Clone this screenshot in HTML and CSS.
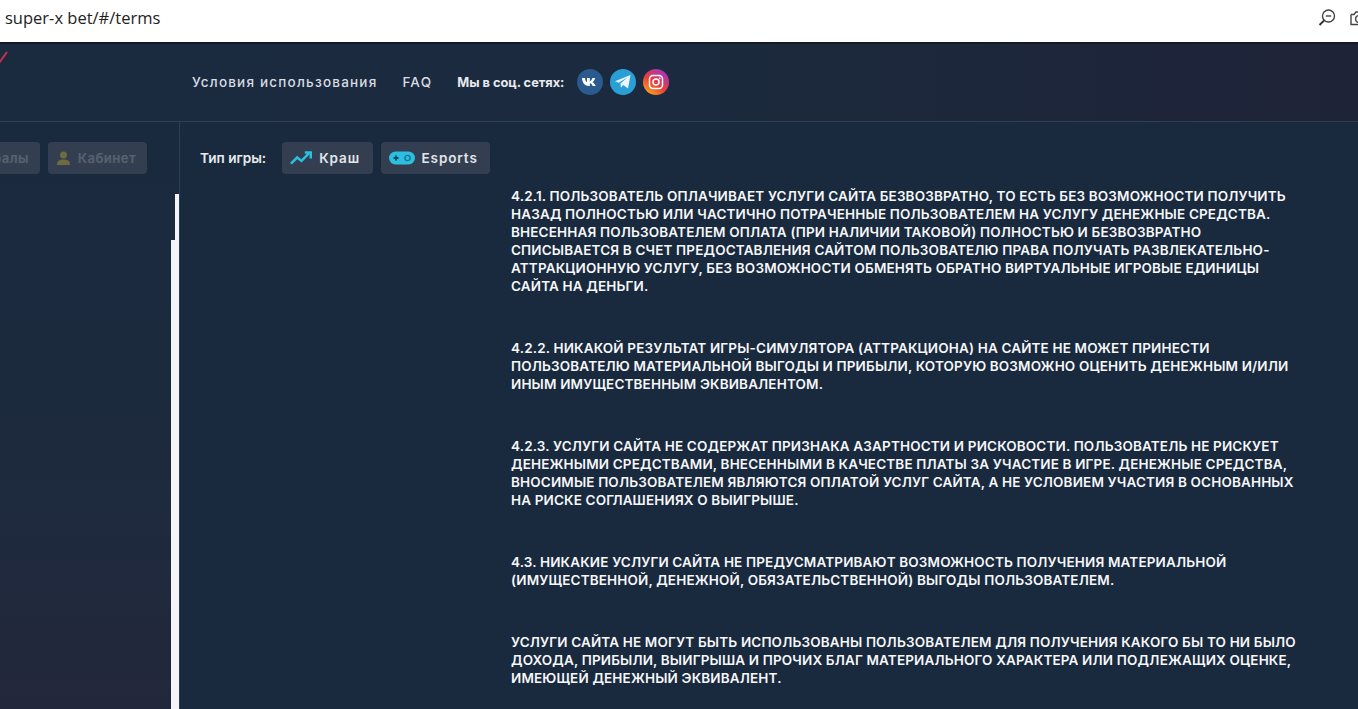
FILE: index.html
```html
<!DOCTYPE html>
<html lang="ru">
<head>
<meta charset="utf-8">
<title>super-x bet</title>
<link rel="stylesheet" href="styles.css">
</head>
<body>
<div class="urlbar">
  <span class="url">super-x bet/#/terms</span>
  <div class="tools">
    <svg class="tool" width="20" height="20" viewBox="0 0 20 20"><circle cx="11.5" cy="8" r="6" fill="none" stroke="#444" stroke-width="1.4"/><path d="M8.8 8h5.4" stroke="#444" stroke-width="1.4"/><path d="M7.2 12.4 2.5 17" stroke="#333" stroke-width="2"/></svg>
    <svg class="tool" width="14" height="20" viewBox="0 0 14 20"><path d="M1 6.5h3l2-2.500h8M1 6.500v10h13" fill="none" stroke="#444" stroke-width="1.4"/><circle cx="9" cy="11" r="3.400" fill="none" stroke="#444" stroke-width="1.300"/></svg>
  </div>
</div>
<header class="header">
  <div class="logo-slot">
    <svg class="logo-tick" width="10" height="14" viewBox="0 0 10 14"><path d="M0 12 8 1" stroke="#c8324f" stroke-width="2" fill="none"/></svg>
  </div>
  <nav class="nav">
    <a class="nav-link">Условия использования</a>
    <a class="nav-link">FAQ</a>
    <span class="social-label">Мы в соц. сетях:</span>
    <div class="socials">
      <span class="social vk"><svg width="18" height="12" viewBox="0 0 18 12"><path d="M1 2h3c.2 2.500 1.200 4 2 4.300V2h2.800v3.400C9.800 5.200 10.800 3.800 11.400 2h2.800c-.4 1.900-1.700 3.400-2.700 4.200 1 .6 2.500 1.900 3.200 3.800h-3c-.6-1.600-1.700-2.600-2.900-2.800V10h-.8C4 10 1.300 7 1 2Z" fill="#fff"/></svg></span>
      <span class="social tg"><svg width="18" height="16" viewBox="0 0 18 16"><path d="M1 7.300 16.500 1 14 14.500 9.300 11l-2.400 2.500-.5-3.900 7-6-8.800 5.200Z" fill="#eaf4fa"/></svg></span>
      <span class="social ig"><svg width="16" height="16" viewBox="0 0 16 16" fill="none" stroke="#fff" stroke-width="1.500"><rect x="1.500" y="1.500" width="13" height="13" rx="3.500"/><circle cx="8" cy="8" r="3"/><circle cx="11.700" cy="4.300" r=".6" fill="#fff" stroke-width=".6"/></svg></span>
    </div>
  </nav>
</header>
<div class="body">
  <aside class="sidebar">
    <div class="side-buttons">
      <span class="side-btn">Рефералы</span>
      <span class="side-btn"><svg width="15" height="15" viewBox="0 0 15 15"><circle cx="7.500" cy="4" r="3.500" fill="#6f6a3f"/><path d="M1 14c0-4 2-5.500 6.500-5.500S14 10 14 14Z" fill="#6f6a3f"/></svg>Кабинет</span>
    </div>
    <div class="thumb-outer"></div>
    <div class="thumb-inner"></div>
  </aside>
  <main class="main">
    <div class="game-types">
      <span class="type-label">Тип игры:</span>
      <span class="type-btn"><svg width="22" height="14" viewBox="0 0 23 14"><path d="M1 13 7.500 6.500l4.500 3.500 8-8" fill="none" stroke="#2bbfe0" stroke-width="2.600"/><path d="M15.500 1.300H21.700v6.200" fill="none" stroke="#2bbfe0" stroke-width="2.600"/></svg>Краш</span>
      <span class="type-btn"><svg width="26" height="14" viewBox="0 0 26 14"><rect x="0" y="0.500" width="26" height="13" rx="6.500" fill="#2bbfe0"/><path d="M7 4.500v5M4.500 7h5" stroke="#1a4a66" stroke-width="1.800"/><circle cx="18.500" cy="7" r="2.600" fill="none" stroke="#1a6f8e" stroke-width="1.300"/></svg>Esports</span>
    </div>
    <article class="terms">
      <p>4.2.1. ПОЛЬЗОВАТЕЛЬ ОПЛАЧИВАЕТ УСЛУГИ САЙТА БЕЗВОЗВРАТНО, ТО ЕСТЬ БЕЗ ВОЗМОЖНОСТИ ПОЛУЧИТЬ<br>НАЗАД ПОЛНОСТЬЮ ИЛИ ЧАСТИЧНО ПОТРАЧЕННЫЕ ПОЛЬЗОВАТЕЛЕМ НА УСЛУГУ ДЕНЕЖНЫЕ СРЕДСТВА.<br>ВНЕСЕННАЯ ПОЛЬЗОВАТЕЛЕМ ОПЛАТА (ПРИ НАЛИЧИИ ТАКОВОЙ) ПОЛНОСТЬЮ И БЕЗВОЗВРАТНО<br>СПИСЫВАЕТСЯ В СЧЕТ ПРЕДОСТАВЛЕНИЯ САЙТОМ ПОЛЬЗОВАТЕЛЮ ПРАВА ПОЛУЧАТЬ РАЗВЛЕКАТЕЛЬНО-<br>АТТРАКЦИОННУЮ УСЛУГУ, БЕЗ ВОЗМОЖНОСТИ ОБМЕНЯТЬ ОБРАТНО ВИРТУАЛЬНЫЕ ИГРОВЫЕ ЕДИНИЦЫ<br>САЙТА НА ДЕНЬГИ.</p>
      <p>4.2.2. НИКАКОЙ РЕЗУЛЬТАТ ИГРЫ-СИМУЛЯТОРА (АТТРАКЦИОНА) НА САЙТЕ НЕ МОЖЕТ ПРИНЕСТИ<br>ПОЛЬЗОВАТЕЛЮ МАТЕРИАЛЬНОЙ ВЫГОДЫ И ПРИБЫЛИ, КОТОРУЮ ВОЗМОЖНО ОЦЕНИТЬ ДЕНЕЖНЫМ И/ИЛИ<br>ИНЫМ ИМУЩЕСТВЕННЫМ ЭКВИВАЛЕНТОМ.</p>
      <p>4.2.3. УСЛУГИ САЙТА НЕ СОДЕРЖАТ ПРИЗНАКА АЗАРТНОСТИ И РИСКОВОСТИ. ПОЛЬЗОВАТЕЛЬ НЕ РИСКУЕТ<br>ДЕНЕЖНЫМИ СРЕДСТВАМИ, ВНЕСЕННЫМИ В КАЧЕСТВЕ ПЛАТЫ ЗА УЧАСТИЕ В ИГРЕ. ДЕНЕЖНЫЕ СРЕДСТВА,<br>ВНОСИМЫЕ ПОЛЬЗОВАТЕЛЕМ ЯВЛЯЮТСЯ ОПЛАТОЙ УСЛУГ САЙТА, А НЕ УСЛОВИЕМ УЧАСТИЯ В ОСНОВАННЫХ<br>НА РИСКЕ СОГЛАШЕНИЯХ О ВЫИГРЫШЕ.</p>
      <p>4.3. НИКАКИЕ УСЛУГИ САЙТА НЕ ПРЕДУСМАТРИВАЮТ ВОЗМОЖНОСТЬ ПОЛУЧЕНИЯ МАТЕРИАЛЬНОЙ<br>(ИМУЩЕСТВЕННОЙ, ДЕНЕЖНОЙ, ОБЯЗАТЕЛЬСТВЕННОЙ) ВЫГОДЫ ПОЛЬЗОВАТЕЛЕМ.</p>
      <p>УСЛУГИ САЙТА НЕ МОГУТ БЫТЬ ИСПОЛЬЗОВАНЫ ПОЛЬЗОВАТЕЛЕМ ДЛЯ ПОЛУЧЕНИЯ КАКОГО БЫ ТО НИ БЫЛО<br>ДОХОДА, ПРИБЫЛИ, ВЫИГРЫША И ПРОЧИХ БЛАГ МАТЕРИАЛЬНОГО ХАРАКТЕРА ИЛИ ПОДЛЕЖАЩИХ ОЦЕНКЕ,<br>ИМЕЮЩЕЙ ДЕНЕЖНЫЙ ЭКВИВАЛЕНТ.</p>
    </article>
  </main>
</div>
</body>
</html>
```
FILE: styles.css
```css
* { box-sizing: border-box; }
html, body { margin: 0; height: 100%; overflow: hidden; }
body {
  display: flex;
  flex-direction: column;
  height: 709px;
  background: #1a2a3e;
  font-family: Inter, "Open Sans", sans-serif;
  color: #fff;
}
.urlbar {
  height: 42px;
  flex: none;
  background: #fff;
  display: flex;
  align-items: center;
  justify-content: space-between;
  padding: 0 0 7px 5px;
}
.url { font-family: "Open Sans", sans-serif; font-size: 16.500px; color: #222; }
.tools { display: flex; gap: 13px; width: 42px; margin-right: -1px; overflow: hidden; }
.tool { flex: none; }
.header {
  height: 80px;
  flex: none;
  display: flex;
  align-items: center;
  background: linear-gradient(90deg, #1b2b3f 0%, #1b2a3e 50%, #1f2338 100%);
  border-top: 2px solid #121a27;
  border-bottom: 1px solid #2f3e50;
}
.logo-slot { width: 192px; height: 100%; flex: none; }
.logo-tick { display: block; margin-top: 7px; margin-left: -1px; }
.nav { display: flex; align-items: center; margin-bottom: 1px; }
.nav-link {
  font-size: 13.500px;
  font-weight: 500;
  letter-spacing: 1.200px;
  color: #d8dce2;
  margin-right: 25px;
}
.social-label {
  font-size: 12.800px;
  font-weight: 700;
  color: #e8eaee;
  margin-right: 13px;
}
.socials { display: flex; gap: 7px; }
.social {
  width: 26px;
  height: 26px;
  border-radius: 50%;
  display: flex;
  align-items: center;
  justify-content: center;
}
.vk { background: #2b5a8e; }
.tg { background: #2a9fd6; }
.ig { background: linear-gradient(35deg, #f7a520 10%, #e8403a 45%, #b335a8 80%, #6a48c0 100%); }
.body { flex: 1; display: flex; min-height: 0; }
.sidebar {
  position: relative;
  width: 180px;
  flex: none;
  background: linear-gradient(180deg, #1a2a3e 0%, #1d2a3e 60%, #23273b 100%);
  border-right: 1px solid #2f3e50;
  overflow: hidden;
  display: flex;
  justify-content: flex-end;
  padding: 20px 32px 0 0;
}
.side-buttons { display: flex; gap: 8px; height: 32px; flex: none; }
.side-btn {
  height: 32px;
  padding: 0 11px 0 8px;
  background: #333f50;
  border-radius: 4px;
  display: flex;
  align-items: center;
  gap: 7px;
  font-size: 13px;
  font-weight: 700;
  letter-spacing: .4px;
  color: #56606e;
  white-space: nowrap;
}
.thumb-outer {
  position: absolute;
  right: 0;
  top: 72px;
  bottom: 0;
  width: 4px;
  background: #f3f5f8;
}
.thumb-inner {
  position: absolute;
  right: 4px;
  top: 118px;
  bottom: 0;
  width: 4px;
  background: #f3f5f8;
}
.main { flex: 1; min-width: 0; display: flex; flex-direction: column; padding-left: 20px; }
.game-types { display: flex; align-items: center; gap: 8px; padding-top: 20px; height: 52px; flex: none; }
.type-label { font-size: 13.600px; font-weight: 600; color: #e8eaee; margin-right: 8px; }
.type-btn {
  height: 32px;
  padding: 0 12.500px 0 8px;
  background: #333f50;
  border-radius: 4px;
  display: flex;
  align-items: center;
  gap: 7px;
  font-size: 13.500px;
  font-weight: 600;
  letter-spacing: .9px;
  color: #e2e5ea;
}
.terms {
  margin: 13px 0 0 311px;
  font-size: 13.500px;
  line-height: 18px;
  font-weight: 600;
  letter-spacing: .15px;
  color: #f6f7f9;
  white-space: nowrap;
}
.terms p { margin: 0 0 44px; }
```
